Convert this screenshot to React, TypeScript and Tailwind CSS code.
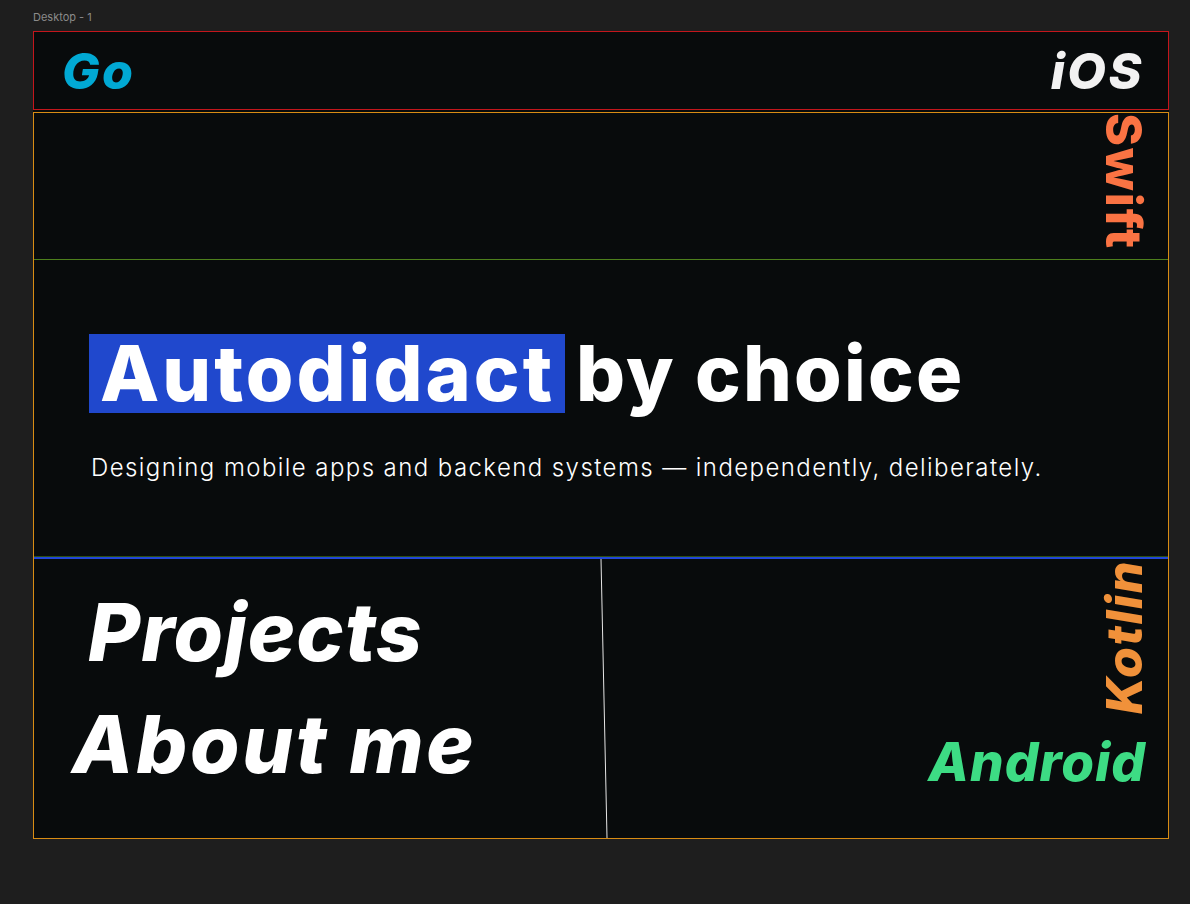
import React from "react";

const heavy = "font-['Inter','Liberation_Sans',sans-serif] font-extrabold";

export default function App() {
  return (
    <div className="min-h-[904px] w-[1190px] bg-[#1e1e1e] pt-[10px]">
      <div className="ml-[33px] h-[16px] text-[11px] leading-[14px] text-[#8b8b8b] font-['Inter',sans-serif]">
        Desktop - 1
      </div>
      <div className="ml-[33px] mt-[5px] flex w-[1136px] flex-col gap-[2px] bg-[#080b0c]">
        {/* top bar */}
        <div className="flex h-[79px] items-center justify-between border border-[#c3161c] pl-[28px] pr-[24px]">
          <span className={`${heavy} italic text-[50px] leading-none text-[#01a9d4] tracking-[2.5px]`}>Go</span>
          <span className={`${heavy} italic text-[50px] leading-none text-[#f2f2f2] tracking-[2.5px]`}>iOS</span>
        </div>

        <div className="flex h-[727px] flex-col border border-[#d88c14]">
          {/* swift strip */}
          <div className="flex h-[147px] justify-end overflow-hidden border-b border-[#4d7f1c] pr-[22px]">
            <span className={`${heavy} text-[50px] leading-[44px] text-[#fa7343] tracking-[1.8px] [writing-mode:vertical-rl]`}>
              Swift
            </span>
          </div>

          {/* hero */}
          <div className="flex h-[297px] flex-col border-b border-[#2c4f14] pl-[55px] pt-[74px]">
            <h1 className={`${heavy} flex items-center text-[77px] leading-none text-white`}>
              <span className="flex h-[79px] items-center bg-[#2048cd] pl-[11px] pr-[10px] tracking-[3px]">Autodidact</span>
              <span className="ml-[11px] tracking-[2.2px]">by choice</span>
            </h1>
            <p className="mt-[40px] ml-[2px] font-['Inter',sans-serif] font-light text-[24px] leading-[30px] text-white tracking-[1.42px]">
              Designing mobile apps and backend systems — independently, deliberately.
            </p>
          </div>

          {/* bottom */}
          <div className="flex flex-1 border-t-2 border-[#2147d8]">
            <div className="flex w-[566px] flex-col pt-[23px]">
              <span className={`${heavy} italic ml-[54px] text-[80px] leading-[100px] text-white tracking-[1px]`}>
                Projects
              </span>
              <span className={`${heavy} italic ml-[38px] mt-[12px] text-[80px] leading-[100px] text-white tracking-[2.7px]`}>
                About me
              </span>
            </div>
            <svg width="8" height="279" viewBox="0 0 8 279" className="block shrink-0">
              <line x1="1" y1="0" x2="7" y2="279" stroke="#e6e6e6" strokeWidth="1" />
            </svg>
            <div className="flex flex-1 flex-col items-end pr-[22px] pt-[1px]">
              <span className={`${heavy} italic text-[50px] leading-[44px] text-[#f0913a] tracking-[1.5px] [writing-mode:vertical-rl] rotate-180`}>
                Kotlin
              </span>
              <span className={`${heavy} italic mt-[20px] text-[53px] leading-[56px] text-[#3ddc84] tracking-[1px]`}>
                Android
              </span>
            </div>
          </div>
        </div>
      </div>
    </div>
  );
}
